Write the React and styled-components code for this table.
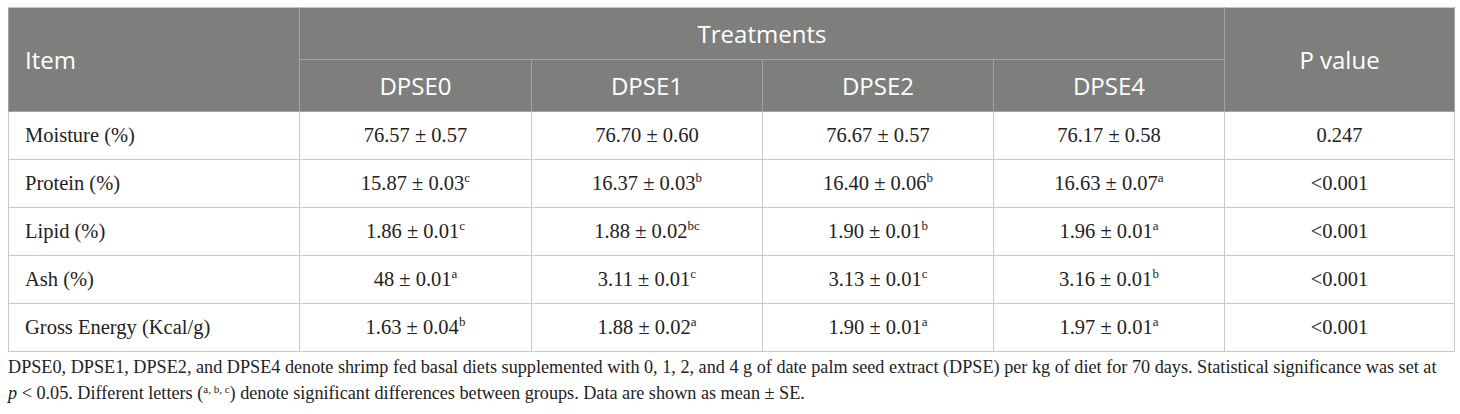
import React from 'react';
import styled, {createGlobalStyle} from 'styled-components';

const GlobalStyle = createGlobalStyle`
  body {
    margin: 0;
    background: #ffffff;
  }
`;

const Page = styled.div`
  padding: 7px 0 0 8px;
`;

const Table = styled.table`
  width: 1446px;
  border-collapse: collapse;
  table-layout: fixed;
  border: 1px solid #c9c9c9;
`;

const HeadCell = styled.th`
  background: #7e7f7d;
  color: #ffffff;
  font-family: "Open Sans", "Noto Sans", sans-serif;
  font-weight: 400;
  font-size: 24px;
  height: ${(p) => p.h || 51}px;
  padding: 0 ${(p) => (p.left ? 16 : 0)}px;
  text-align: ${(p) => (p.left ? 'left' : 'center')};
  border: 1px solid #a3a4a2;
  border-top-color: #c9c9c9;
  vertical-align: middle;
  line-height: 1;
`;

const Cell = styled.td`
  font-family: "Liberation Serif", "Times New Roman", serif;
  font-size: 20.5px;
  color: #222;
  height: 47px;
  padding: 0 ${(p) => (p.left ? 16 : 0)}px;
  text-align: ${(p) => (p.left ? 'left' : 'center')};
  border: 1px solid #c9c9c9;
  vertical-align: middle;
  white-space: nowrap;
`;

const Sup = styled.sup`
  font-size: ${(p) => p.size || 13}px;
  line-height: 0;
  vertical-align: ${(p) => p.raise || 8}px;
`;

const Caption = styled.p`
  margin: 2px 0 0;
  font-family: "Liberation Serif", "Times New Roman", serif;
  font-size: 18.2px;
  line-height: 26px;
  color: #222;
  width: 1452px;
  white-space: nowrap;
`;

const widths = [291, 232, 231, 231, 231, 230];

const rows = [
  {item: 'Moisture (%)', vals: [['76.57 ± 0.57'], ['76.70 ± 0.60'], ['76.67 ± 0.57'], ['76.17 ± 0.58']], p: '0.247'},
  {item: 'Protein (%)', vals: [['15.87 ± 0.03', 'c'], ['16.37 ± 0.03', 'b'], ['16.40 ± 0.06', 'b'], ['16.63 ± 0.07', 'a']], p: '<0.001'},
  {item: 'Lipid (%)', vals: [['1.86 ± 0.01', 'c'], ['1.88 ± 0.02', 'bc'], ['1.90 ± 0.01', 'b'], ['1.96 ± 0.01', 'a']], p: '<0.001'},
  {item: 'Ash (%)', vals: [['48 ± 0.01', 'a'], ['3.11 ± 0.01', 'c'], ['3.13 ± 0.01', 'c'], ['3.16 ± 0.01', 'b']], p: '<0.001'},
  {item: 'Gross Energy (Kcal/g)', vals: [['1.63 ± 0.04', 'b'], ['1.88 ± 0.02', 'a'], ['1.90 ± 0.01', 'a'], ['1.97 ± 0.01', 'a']], p: '<0.001'},
];

export default function App() {
  return (
    <Page>
      <GlobalStyle />
      <Table>
        <colgroup>
          {widths.map((w, i) => <col key={i} style={{width: w}} />)}
        </colgroup>
        <thead>
          <tr>
            <HeadCell left rowSpan={2}>Item</HeadCell>
            <HeadCell colSpan={4}>Treatments</HeadCell>
            <HeadCell rowSpan={2}>P value</HeadCell>
          </tr>
          <tr>
            <HeadCell>DPSE0</HeadCell>
            <HeadCell>DPSE1</HeadCell>
            <HeadCell>DPSE2</HeadCell>
            <HeadCell>DPSE4</HeadCell>
          </tr>
        </thead>
        <tbody>
          {rows.map((r) => (
            <tr key={r.item}>
              <Cell left>{r.item}</Cell>
              {r.vals.map(([v, s], i) => (
                <Cell key={i}>{v}{s && <Sup>{s}</Sup>}</Cell>
              ))}
              <Cell>{r.p}</Cell>
            </tr>
          ))}
        </tbody>
      </Table>
      <Caption>
        DPSE0, DPSE1, DPSE2, and DPSE4 denote shrimp fed basal diets supplemented with 0, 1, 2, and 4 g of date palm seed extract (DPSE) per kg of diet for 70 days. Statistical significance was set at
        <br />
        <i>p</i> &lt; 0.05. Different letters (<Sup size={11} raise={6}>a, b, c</Sup>) denote significant differences between groups. Data are shown as mean ± SE.
      </Caption>
    </Page>
  );
}
